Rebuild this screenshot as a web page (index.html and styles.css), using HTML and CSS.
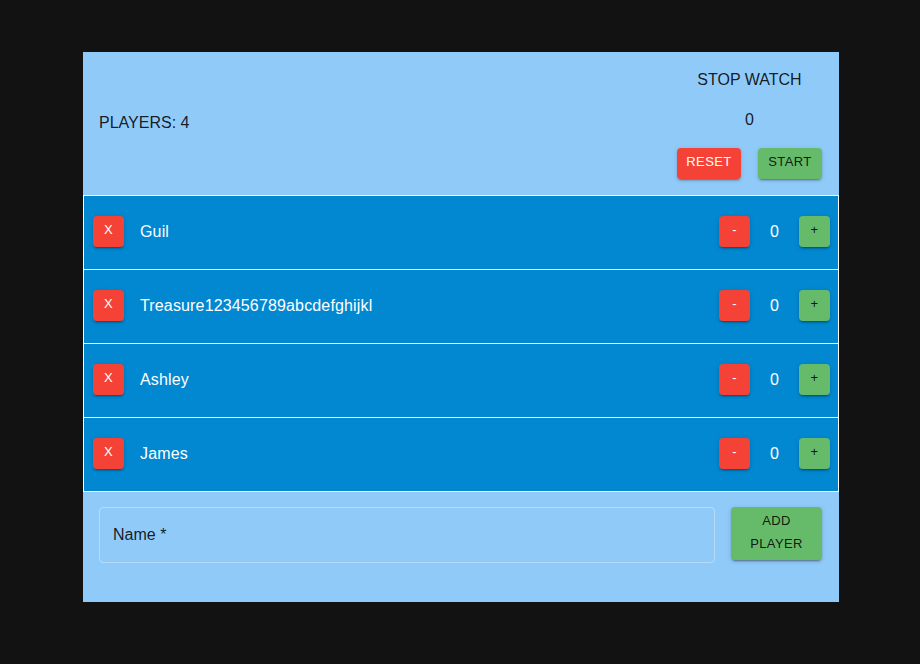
FILE: index.html
```html
<!DOCTYPE html>
<html lang="en">
<head>
<meta charset="utf-8">
<title>Scoreboard</title>
<link rel="stylesheet" href="styles.css">
</head>
<body>
<main class="board">
  <header class="board-header">
    <div class="players-count">PLAYERS: 4</div>
    <div class="stopwatch">
      <div class="stopwatch-title">STOP WATCH</div>
      <div class="stopwatch-time">0</div>
      <div class="stopwatch-actions">
        <button class="btn btn-red btn-small">RESET</button>
        <button class="btn btn-green btn-small">START</button>
      </div>
    </div>
  </header>
  <ul class="player-list">
    <li class="player">
      <button class="btn btn-red btn-square">X</button>
      <span class="player-name">Guil</span>
      <div class="score">
        <button class="btn btn-red btn-square">-</button>
        <span class="score-value">0</span>
        <button class="btn btn-green btn-square">+</button>
      </div>
    </li>
    <li class="player">
      <button class="btn btn-red btn-square">X</button>
      <span class="player-name">Treasure123456789abcdefghijkl</span>
      <div class="score">
        <button class="btn btn-red btn-square">-</button>
        <span class="score-value">0</span>
        <button class="btn btn-green btn-square">+</button>
      </div>
    </li>
    <li class="player">
      <button class="btn btn-red btn-square">X</button>
      <span class="player-name">Ashley</span>
      <div class="score">
        <button class="btn btn-red btn-square">-</button>
        <span class="score-value">0</span>
        <button class="btn btn-green btn-square">+</button>
      </div>
    </li>
    <li class="player">
      <button class="btn btn-red btn-square">X</button>
      <span class="player-name">James</span>
      <div class="score">
        <button class="btn btn-red btn-square">-</button>
        <span class="score-value">0</span>
        <button class="btn btn-green btn-square">+</button>
      </div>
    </li>
  </ul>
  <form class="add-player">
    <label class="name-field">
      <span class="name-label">Name *</span>
    </label>
    <button type="button" class="btn btn-green add-btn">ADD<br>PLAYER</button>
  </form>
</main>
</body>
</html>
```

FILE: styles.css
```css
* { box-sizing: border-box; }

html, body {
  margin: 0;
  padding: 0;
  background: #121212;
  height: 100%;
}

body {
  font-family: "Liberation Sans", Arial, sans-serif;
  color: rgba(0, 0, 0, 0.87);
}

.board {
  width: 756px;
  margin: 52px 0 0 83px;
  background: #90caf9;
  display: flex;
  flex-direction: column;
}

.board-header {
  height: 143px;
  display: flex;
  align-items: center;
  justify-content: space-between;
  padding: 0 17px 0 16px;
}

.players-count {
  font-size: 16px;
  line-height: 24px;
  margin-top: -2px;
}

.stopwatch {
  display: flex;
  flex-direction: column;
  align-items: center;
  align-self: stretch;
  padding-top: 16px;
}

.stopwatch-title,
.stopwatch-time {
  font-size: 16px;
  line-height: 24px;
}

.stopwatch-time {
  margin-top: 16px;
}

.stopwatch-actions {
  display: flex;
  gap: 17px;
  margin-top: 16px;
}

.btn {
  font-family: "Liberation Sans", Arial, sans-serif;
  border: none;
  border-radius: 4px;
  font-weight: 400;
  letter-spacing: 0.4px;
  cursor: pointer;
  box-shadow: 0 3px 1px -2px rgba(0,0,0,0.2), 0 2px 2px 0 rgba(0,0,0,0.14), 0 1px 5px 0 rgba(0,0,0,0.12);
}

.btn-red {
  background: #f44336;
  color: #fff;
}

.btn-green {
  background: #66bb6a;
  color: rgba(0, 0, 0, 0.87);
}

.btn-small {
  font-size: 13px;
  line-height: 28px;
  padding: 0 0 3px;
  width: 64px;
  height: 31px;
  text-align: center;
}

.btn-square {
  width: 31px;
  height: 31px;
  padding: 0 0 3px;
  font-size: 13px;
  line-height: 28px;
  text-align: center;
  flex: none;
}

.player-list {
  list-style: none;
  margin: 0;
  padding: 0;
}

.player {
  height: 74px;
  display: flex;
  align-items: center;
  background: #0288d1;
  border: 1px solid #fff;
  border-bottom: none;
  padding: 0 8px 2px 9px;
  color: #fff;
}

.player:last-child {
  height: 75px;
  border-bottom: 1px solid #fff;
}

.player-name {
  margin-left: 16px;
  font-size: 16px;
  line-height: 24px;
  letter-spacing: 0.15px;
  flex: 1;
}

.score {
  display: flex;
  align-items: center;
}

.score-value {
  width: 49px;
  text-align: center;
  font-size: 16px;
  line-height: 24px;
}

.add-player {
  margin: 0;
  height: 110px;
  display: flex;
  align-items: flex-start;
  gap: 16px;
  padding: 15px 17px 0 16px;
}

.name-field {
  flex: 1;
  height: 56px;
  border: 1px solid rgba(255, 255, 255, 0.35);
  border-radius: 4px;
  display: flex;
  align-items: center;
  padding: 0 13px;
}

.name-label {
  font-size: 16px;
  line-height: 24px;
  color: rgba(0, 0, 0, 0.87);
}

.add-btn {
  width: 91px;
  height: 53px;
  padding: 2px 10px 6px;
  font-size: 13px;
  line-height: 23px;
  text-align: center;
}
```
